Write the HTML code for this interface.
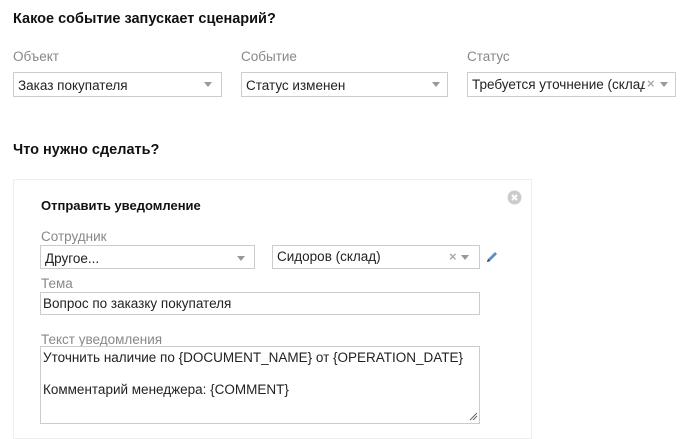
<!DOCTYPE html>
<html><head><meta charset="utf-8"><style>
*{box-sizing:border-box;margin:0;padding:0}
body{width:692px;height:430px;overflow:hidden;background:#fff;font-family:"Liberation Sans",Arial,sans-serif;color:#222;position:relative}
.a{position:absolute;white-space:nowrap}
.h{font-weight:bold;font-size:14.5px;color:#111}
.l{font-size:13.5px;color:#888}
.box{position:absolute;border:1px solid #ccc;background:#fff;font-size:13.5px;color:#222;padding:0 4px;white-space:nowrap;overflow:hidden}
.arr{position:absolute;width:0;height:0;border-left:4.5px solid transparent;border-right:4.5px solid transparent;border-top:5px solid #999}
.x{position:absolute;font-size:13px;color:#aaa;font-weight:bold}
</style></head><body>
<div class="a h" style="left:13px;top:11px">Какое событие запускает сценарий?</div>
<div class="a l" style="left:13px;top:49px">Объект</div>
<div class="a l" style="left:241px;top:49px">Событие</div>
<div class="a l" style="left:467px;top:49px">Статус</div>
<div class="box" style="left:13px;top:72px;width:209px;height:25px;line-height:25px">Заказ покупателя</div>
<div class="arr" style="left:204px;top:82px"></div>
<div class="box" style="left:241px;top:72px;width:207px;height:25px;line-height:25px">Статус изменен</div>
<div class="arr" style="left:432px;top:82px"></div>
<div class="box" style="left:467px;top:72px;width:209px;height:25px;line-height:23px;padding:0 0 0 4px"><div style="width:173px;overflow:hidden">Требуется уточнение (склад)</div></div>
<div class="x" style="left:647px;top:76px">×</div>
<div class="arr" style="left:660px;top:82px"></div>
<div class="a h" style="left:13px;top:142px">Что нужно сделать?</div>
<div style="position:absolute;left:13px;top:179px;width:519px;height:260px;border:1px solid #eee;background:#fff"></div>
<div class="a" style="left:41px;top:198px;font-weight:bold;font-size:13px;color:#111">Отправить уведомление</div>
<svg style="position:absolute;left:507px;top:190px" width="15" height="15"><circle cx="7.5" cy="7.5" r="7" fill="#ccc"/><path d="M5 5L10 10M10 5L5 10" stroke="#fff" stroke-width="2"/></svg>
<div class="a l" style="left:41px;top:229px">Сотрудник</div>
<div class="box" style="left:40px;top:245px;width:215px;height:24px;line-height:26px">Другое...</div>
<div class="arr" style="left:237px;top:256px"></div>
<div class="box" style="left:272px;top:245px;width:208px;height:24px;line-height:22px">Сидоров (склад)</div>
<div class="x" style="left:449px;top:249px">×</div>
<div class="arr" style="left:461px;top:255px"></div>
<svg style="position:absolute;left:485px;top:250px" width="14" height="14"><path d="M2 12L3 9L10 2L12 4L5 11Z" fill="#5b8fc7"/><path d="M2 12L3 9L5 11Z" fill="#335"/></svg>
<div class="a l" style="left:41px;top:276px">Тема</div>
<div class="box" style="left:40px;top:292px;width:440px;height:23px;line-height:21px;padding-left:2px">Вопрос по заказку покупателя</div>
<div class="a l" style="left:41px;top:332px">Текст уведомления</div>
<div class="box" style="left:40px;top:346px;width:440px;height:78px;line-height:16px;padding:3px 2px;white-space:pre">Уточнить наличие по {DOCUMENT_NAME} от {OPERATION_DATE}

Комментарий менеджера: {COMMENT}</div>
<svg style="position:absolute;left:469px;top:412px" width="9" height="9"><path d="M1 8L8 1M4 8L8 4" stroke="#666" stroke-width="1"/></svg>
</body></html>
